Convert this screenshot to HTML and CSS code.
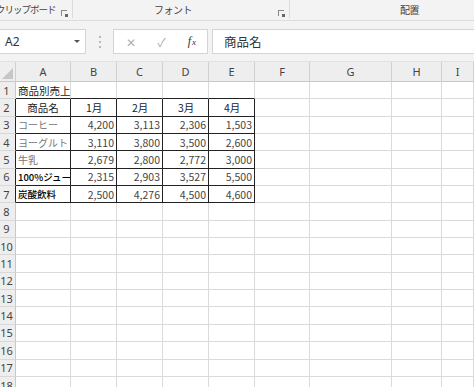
FILE: index.html
```html
<!DOCTYPE html>
<html lang="ja">

<head>
    <meta charset="UTF-8">
    <meta name="viewport" content="width=device-width, initial-scale=1.0">
    <title>Book1 - Excel</title>
    <link rel="stylesheet" href="styles.css">
</head>

<body>
    <section class="ribbon">
        <div class="group clipboard">
            <span class="group-label">クリップボード</span>
            <span class="launcher"></span>
        </div>
        <div class="group font">
            <span class="group-label">フォント</span>
            <span class="launcher"></span>
        </div>
        <div class="group align">
            <span class="group-label">配置</span>
        </div>
    </section>

    <section class="formula-bar">
        <div class="name-box">
            <span>A2</span>
            <span class="caret"></span>
        </div>
        <div class="grip"><i></i><i></i><i></i></div>
        <div class="fx-buttons">
            <span class="fx-btn cancel">&#x2715;</span>
            <span class="fx-btn enter">&#x2713;</span>
            <span class="fx-btn fx">f<span class="fx-x">x</span></span>
        </div>
        <div class="formula-input">商品名</div>
    </section>

    <section class="sheet">
        <div class="corner"><span class="tri"></span></div>
        <div class="col-head">A</div>
        <div class="col-head">B</div>
        <div class="col-head">C</div>
        <div class="col-head">D</div>
        <div class="col-head">E</div>
        <div class="col-head">F</div>
        <div class="col-head">G</div>
        <div class="col-head">H</div>
        <div class="col-head">I</div>

        <!-- row 1 -->
        <div class="row-head">1</div>
        <div class="cell over top-edge">商品別売上</div>
        <div class="cell top-edge"></div>
        <div class="cell top-edge"></div>
        <div class="cell top-edge"></div>
        <div class="cell top-edge"></div>
        <div class="cell"></div>
        <div class="cell"></div>
        <div class="cell"></div>
        <div class="cell"></div>

        <!-- row 2 -->
        <div class="row-head left-edge">2</div>
        <div class="cell boxed center">商品名</div>
        <div class="cell boxed month">1月</div>
        <div class="cell boxed month">2月</div>
        <div class="cell boxed month">3月</div>
        <div class="cell boxed month">4月</div>
        <div class="cell"></div>
        <div class="cell"></div>
        <div class="cell"></div>
        <div class="cell"></div>

        <!-- row 3 -->
        <div class="row-head left-edge">3</div>
        <div class="cell boxed light">コーヒー</div>
        <div class="cell boxed num">4,200</div>
        <div class="cell boxed num">3,113</div>
        <div class="cell boxed num">2,306</div>
        <div class="cell boxed num">1,503</div>
        <div class="cell"></div>
        <div class="cell"></div>
        <div class="cell"></div>
        <div class="cell"></div>

        <!-- row 4 -->
        <div class="row-head left-edge">4</div>
        <div class="cell boxed light">ヨーグルト</div>
        <div class="cell boxed num">3,110</div>
        <div class="cell boxed num">3,800</div>
        <div class="cell boxed num">3,500</div>
        <div class="cell boxed num">2,600</div>
        <div class="cell"></div>
        <div class="cell"></div>
        <div class="cell"></div>
        <div class="cell"></div>

        <!-- row 5 -->
        <div class="row-head left-edge">5</div>
        <div class="cell boxed light">牛乳</div>
        <div class="cell boxed num">2,679</div>
        <div class="cell boxed num">2,800</div>
        <div class="cell boxed num">2,772</div>
        <div class="cell boxed num">3,000</div>
        <div class="cell"></div>
        <div class="cell"></div>
        <div class="cell"></div>
        <div class="cell"></div>

        <!-- row 6 -->
        <div class="row-head left-edge">6</div>
        <div class="cell boxed dark">100%ジュース</div>
        <div class="cell boxed num">2,315</div>
        <div class="cell boxed num">2,903</div>
        <div class="cell boxed num">3,527</div>
        <div class="cell boxed num">5,500</div>
        <div class="cell"></div>
        <div class="cell"></div>
        <div class="cell"></div>
        <div class="cell"></div>

        <!-- row 7 -->
        <div class="row-head left-edge">7</div>
        <div class="cell boxed dark">炭酸飲料</div>
        <div class="cell boxed num">2,500</div>
        <div class="cell boxed num">4,276</div>
        <div class="cell boxed num">4,500</div>
        <div class="cell boxed num">4,600</div>
        <div class="cell"></div>
        <div class="cell"></div>
        <div class="cell"></div>
        <div class="cell"></div>
    </section>

    <section class="sheet empty" id="emptyRows"></section>

    <script>
        // empty rows 8 - 18
        const emptyRows = document.getElementById('emptyRows')
        for (let r = 8; r <= 18; r++) {
            let html = '<div class="row-head">' + r + '</div>'
            for (let c = 0; c < 9; c++) {
                html += '<div class="cell"></div>'
            }
            emptyRows.insertAdjacentHTML('beforeend', html)
        }
    </script>
</body>

</html>
```

FILE: styles.css
```css
* {
    box-sizing: border-box;
}

body {
    margin: 0;
    width: 474px;
    height: 387px;
    overflow: hidden;
    background-color: #ffffff;
    font-family: "Noto Sans CJK JP", "Noto Sans", sans-serif;
    color: #333;
}

/* Ribbon group labels */
.ribbon {
    display: flex;
    height: 21px;
    background-color: #f3f3f3;
    border-bottom: 1px solid #dcdcdc;
    overflow: hidden;
}

.group {
    position: relative;
    display: flex;
    align-items: center;
    height: 18px;
    border-right: 1px solid #dcdcdc;
    font-size: 10px;
    color: #444;
}

.group.clipboard {
    width: 73px;
    font-size: 9.5px;
}

.group.clipboard .group-label {
    margin-left: -4px;
    letter-spacing: -1px;
}

.group.font {
    width: 217px;
    justify-content: center;
    padding-right: 16px;
}

.group.align {
    flex: 1;
    border-right: none;
    padding-left: 110px;
}

.group-label {
    white-space: nowrap;
    letter-spacing: -0.5px;
}

.launcher {
    position: absolute;
    right: 5px;
    bottom: 2px;
    width: 6px;
    height: 6px;
    border-left: 1px solid #888;
    border-top: 1px solid #888;
}

.launcher:after {
    content: "";
    position: absolute;
    right: -1px;
    bottom: -1px;
    width: 3px;
    height: 3px;
    background-color: #666;
}

/* Formula bar */
.formula-bar {
    display: flex;
    align-items: center;
    height: 41px;
    padding-top: 1px;
    background-color: #f3f3f3;
    border-bottom: 1px solid #e2e2e2;
}

.name-box {
    display: flex;
    align-items: center;
    justify-content: space-between;
    width: 86px;
    height: 25px;
    padding: 0 5px 0 5px;
    background-color: #fff;
    border: 1px solid #d4d4d4;
    border-left: none;
    font-family: "Noto Sans", sans-serif;
    font-size: 12px;
    color: #333;
}

.caret {
    width: 0;
    height: 0;
    border-left: 3px solid transparent;
    border-right: 3px solid transparent;
    border-top: 3px solid #555;
}

.grip {
    display: flex;
    flex-direction: column;
    gap: 3px;
    width: 27px;
    align-items: center;
}

.grip i {
    display: block;
    width: 2px;
    height: 2px;
    background-color: #b8b8b8;
}

.fx-buttons {
    display: flex;
    align-items: center;
    width: 95px;
    height: 25px;
    background-color: #fff;
    border: 1px solid #d4d4d4;
}

.fx-btn {
    display: flex;
    justify-content: center;
    width: 31px;
    color: #b0b0b0;
    font-size: 12px;
}

.fx-btn.cancel {
    margin-left: 2px;
}

.fx-btn.fx {
    align-items: baseline;
    font-family: "Liberation Serif", serif;
    font-style: italic;
    font-size: 12px;
    color: #333;
}

.fx-x {
    font-size: 9px;
    margin-left: 1px;
}

.formula-input {
    flex: 1;
    height: 25px;
    margin-left: 4px;
    padding-left: 11px;
    line-height: 23px;
    background-color: #fff;
    border: 1px solid #d4d4d4;
    border-right: none;
    font-size: 12.5px;
    color: #333;
}

/* Sheet grid */
.sheet {
    display: grid;
    grid-template-columns: 16px 55px 46px 46px 46px 46px 55px 82px 50px 32px;
    grid-auto-rows: 17.35px;
    font-size: 10.5px;
}

.sheet:not(.empty) {
    grid-template-rows: 20px;
}

.corner,
.col-head {
    background-color: #eeeeee;
    border-right: 1px solid #d0d0d0;
    border-bottom: 1px solid #c8c8c8;
}

.corner {
    position: relative;
}

.corner .tri {
    position: absolute;
    right: 2px;
    bottom: 2px;
    width: 0;
    height: 0;
    border-left: 11px solid transparent;
    border-bottom: 11px solid #c6c6c6;
}

.col-head {
    display: flex;
    align-items: center;
    justify-content: center;
    font-family: "Noto Sans", sans-serif;
    font-size: 11px;
    color: #444;
}

.row-head {
    display: flex;
    align-items: center;
    justify-content: center;
    background-color: #eeeeee;
    border-right: 1px solid #c8c8c8;
    border-bottom: 1px solid #d8d8d8;
    font-family: "Noto Sans", sans-serif;
    font-size: 11px;
    color: #444;
    padding-right: 2px;
}

.cell {
    display: flex;
    align-items: center;
    padding: 0 2px;
    border-right: 1px solid #dadada;
    border-bottom: 1px solid #dadada;
    white-space: nowrap;
    overflow: hidden;
    color: #222;
}

.cell.over {
    overflow: visible;
    position: relative;
    z-index: 1;
}

.cell.top-edge {
    border-bottom-color: #222;
}

.row-head.left-edge {
    border-right-color: #222;
}

.cell.boxed {
    border-right-color: #222;
    border-bottom-color: #222;
}

.cell.center {
    justify-content: center;
}

.cell.month {
    padding-left: 15px;
}

.cell.num {
    justify-content: flex-end;
    color: #444;
}

.cell.light {
    color: #777;
    font-size: 10px;
}

.cell.dark {
    color: #000;
    font-size: 9.5px;
    font-weight: 500;
}
```
